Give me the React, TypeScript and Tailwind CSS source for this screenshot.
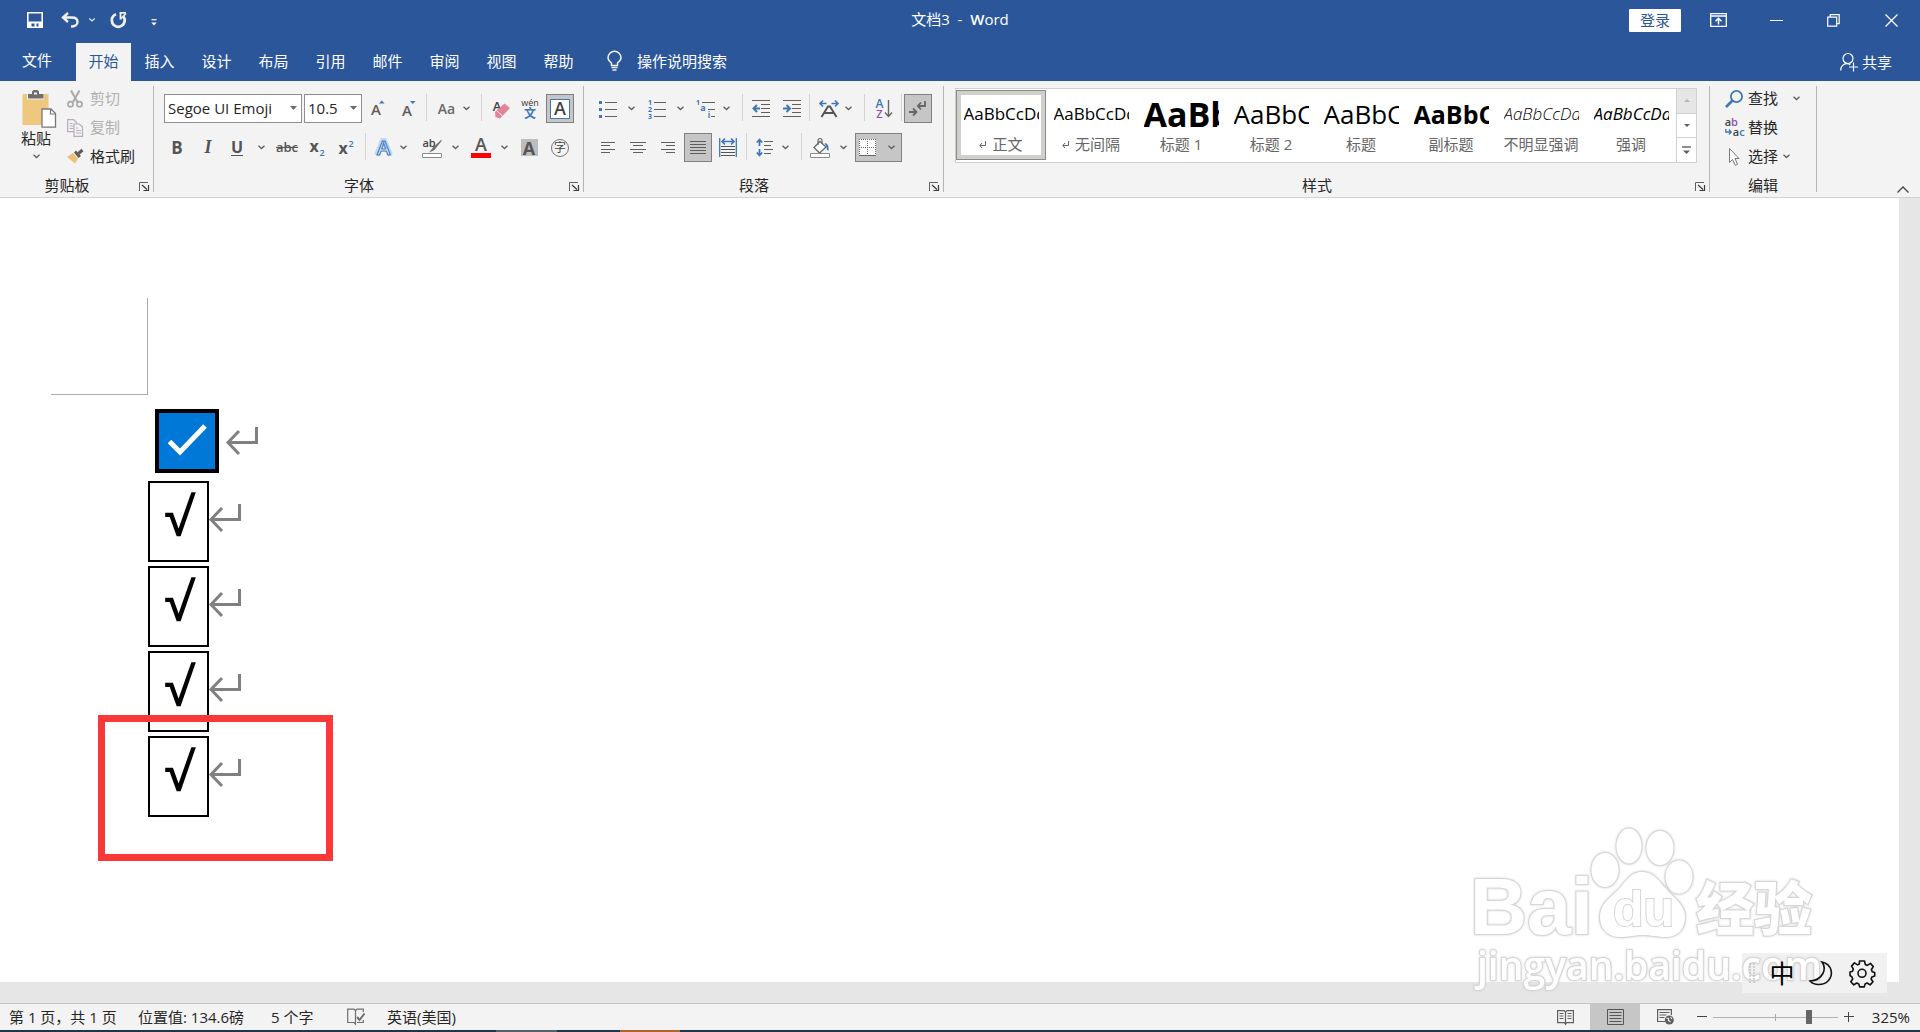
import type { ReactNode } from "react"

const INK = "#5f5f5f"
const BLUE = "#3f78b5"

const tabs = ["插入", "设计", "布局", "引用", "邮件", "审阅", "视图", "帮助"]

const styles = [
  { name: "正文", sample: "AaBbCcDd", look: "text-[17px] font-normal", mark: true },
  { name: "无间隔", sample: "AaBbCcDd", look: "text-[17px] font-normal", mark: true },
  { name: "标题 1", sample: "AaBb", look: "text-[34px] font-bold", mark: false },
  { name: "标题 2", sample: "AaBbC", look: "text-[26px] font-normal", mark: false },
  { name: "标题", sample: "AaBbC", look: "text-[26px] font-normal", mark: false },
  { name: "副标题", sample: "AaBbC", look: "text-[25px] font-bold", mark: false },
  { name: "不明显强调", sample: "AaBbCcDd", look: "text-[17px] font-light italic text-[#404040]", mark: false },
  { name: "强调", sample: "AaBbCcDd", look: "text-[17px] font-normal italic", mark: false },
]

function Svg({ w, h, children }: { w: number; h: number; children: ReactNode }) {
  return (
    <svg width={w} height={h} viewBox={`0 0 ${w} ${h}`} fill="none" className="shrink-0 overflow-visible" aria-hidden="true">
      {children}
    </svg>
  )
}

function Chevron() {
  return (
    <Svg w={7} h={5}>
      <path d="M0.5 0.8 3.5 3.5 6.5 0.8" stroke={INK} strokeWidth="1.4" />
    </Svg>
  )
}

function Triangle() {
  return (
    <Svg w={7} h={4}>
      <path d="M0 0h7L3.5 4z" fill="#6a6a6a" />
    </Svg>
  )
}

function Sep() {
  return <div className="mx-0.5 h-[27px] w-px shrink-0 bg-[#d4d4d4]" />
}

function Tool({ label, className, children }: { label: string; className: string; children: ReactNode }) {
  return (
    <button aria-label={label} className={`flex h-[29px] shrink-0 items-center justify-center ${className}`}>
      {children}
    </button>
  )
}

function Group({ label, launcher = true, className = "", children }: { label: string; launcher?: boolean; className?: string; children: ReactNode }) {
  return (
    <section className="flex shrink-0">
      <div className={`flex flex-col ${className}`}>
        <div className="h-[94px]">{children}</div>
        <div className="flex h-5 items-center">
          <span className="flex-1 text-center text-[15px] leading-5">{label}</span>
          {launcher && (
            <button aria-label={`${label}设置`} className="flex w-[19px] justify-center pt-0.5">
              <Svg w={10} h={9}>
                <path d="M0.5 9V0.5H9" stroke={INK} />
                <path d="M3 3l5 4.500M9.500 3v5.500H4.500" stroke="#3a3a3a" strokeWidth="1.200" />
              </Svg>
            </button>
          )}
        </div>
      </div>
      <div className="mt-[5px] h-[106px] w-px bg-[#b5b5b5]" />
    </section>
  )
}

function Letter({ x, y, size, fill = "#444", weight = 600, children }: { x: number; y: number; size: number; fill?: string; weight?: number; children: ReactNode }) {
  return (
    <text x={x} y={y} fontSize={size} fill={fill} fontWeight={weight} textAnchor="middle" fontFamily="'Open Sans','Noto Sans CJK SC',sans-serif">
      {children}
    </text>
  )
}

function TitleBar() {
  return (
    <div className="flex h-[43px] items-start text-white">
      <div className="flex h-10 flex-1 items-center pl-[27px]">
        <button aria-label="保存" className="mr-[18px]">
          <Svg w={16} h={16}>
            <path d="M0.800 0.800h14.400v14.400H0.800z" stroke="#fff" strokeWidth="1.600" />
            <path d="M1 9.500h14v6H11.500V11.500H9.500V15H7.500V11.500H4.500V15.500H1z" fill="#fff" />
          </Svg>
        </button>
        <button aria-label="撤消" className="mr-2.5">
          <Svg w={18} h={16}>
            <path d="M7 1 2 5.500 7 10M2 5.500h9c4 0 5.500 2 5.500 4.500S14 14.500 10 14.500" stroke="#f0f0f0" strokeWidth="2.400" />
          </Svg>
        </button>
        <button aria-label="撤消选项" className="mr-[15px]">
          <Svg w={6} h={4}>
            <path d="M0.300 0.500 3 3 5.700 0.500" stroke="#e8e8e8" strokeWidth="1.200" />
          </Svg>
        </button>
        <button aria-label="重复" className="mr-6">
          <Svg w={17} h={16}>
            <path d="M6 2.200A6.500 6.500 0 1 0 13.500 4.500" stroke="#f0f0f0" strokeWidth="2.800" />
            <path d="M9.500 0.800H16M10.500 1v6.500" stroke="#f0f0f0" strokeWidth="1.800" />
            <path d="M10.500 7 16 1.500" stroke="#f0f0f0" strokeWidth="1.600" />
          </Svg>
        </button>
        <button aria-label="自定义快速访问工具栏" className="mt-1">
          <Svg w={6} h={7}>
            <path d="M0.500 0.700h5" stroke="#fff" strokeWidth="1.200" />
            <path d="M0.300 3.500h5.400L3 6.500z" fill="#fff" />
          </Svg>
        </button>
      </div>
      <h1 className="pt-[9px] pr-[5px] text-[15px] leading-5 whitespace-pre">
        文档3{"  -  "}
        <span className="font-semibold">W</span>ord
      </h1>
      <div className="flex h-10 flex-1 items-center justify-end pr-[22px]">
        <button className="mr-[29px] h-[23px] w-[52px] rounded-[1px] bg-white text-[15px] leading-5 text-[#2b579a]">登录</button>
        <button aria-label="功能区显示选项" className="mr-[43px]">
          <Svg w={17} h={14}>
            <path d="M0.700 0.700h15.600v12.600H0.700zM1 3h15" stroke="#fff" strokeWidth="1.300" />
            <path d="M8.500 11.500V5.500M5.500 8.300l3-3 3 3" stroke="#fff" strokeWidth="1.500" />
          </Svg>
        </button>
        <button aria-label="最小化" className="mr-11">
          <Svg w={13} h={14}>
            <path d="M0 7.500h13" stroke="#fff" />
          </Svg>
        </button>
        <button aria-label="还原" className="mr-[45px]">
          <Svg w={13} h={13}>
            <path d="M0.700 3.200h9v9h-9z" stroke="#fff" strokeWidth="1.200" />
            <path d="M3.200 3V0.700h9v9H10" stroke="#fff" strokeWidth="1.200" />
          </Svg>
        </button>
        <button aria-label="关闭">
          <Svg w={13} h={13}>
            <path d="M0.500 0.500l12 12M12.500 0.500l-12 12" stroke="#fff" strokeWidth="1.300" />
          </Svg>
        </button>
      </div>
    </div>
  )
}

function TabBar() {
  return (
    <nav className="flex h-[38px] text-[15px] text-white">
      <button className="w-[76px] pr-[2px] pb-1">文件</button>
      <button className="w-[55px] bg-[#f3f3f3] pb-0.5 text-[#2b579a]">开始</button>
      {tabs.map((tab) => (
        <button key={tab} className="w-[57px] pb-0.5">{tab}</button>
      ))}
      <button className="ml-5 flex items-center gap-[15px] pb-0.5">
        <Svg w={15} h={20}>
          <path d="M4.500 14.500V12C2.500 10.500 1 9 1 6.800a6.300 6.300 0 0 1 13 0C14 9 12.500 10.500 10.500 12v2.500z" stroke="#f0f0f0" strokeWidth="1.500" />
          <path d="M4.500 16.500h6M5.500 19h4" stroke="#f0f0f0" strokeWidth="1.500" />
        </Svg>
        操作说明搜索
      </button>
      <button className="ml-auto flex items-center gap-1 pr-[28px]">
        <Svg w={18} h={18}>
          <circle cx="8" cy="5.500" r="5" stroke="#fff" strokeWidth="1.200" />
          <path d="M0.700 17.500c0-4 2.500-6.800 6-6.800 1.500 0 2.600.3 3.600 1M13.500 9.500v9M9 14h9" stroke="#fff" strokeWidth="1.200" />
        </Svg>
        共享
      </button>
    </nav>
  )
}

function Clipboard() {
  return (
    <Group label="剪贴板" className="w-[153px]">
      <div className="flex">
        <button className="flex w-[61px] flex-col items-center pt-[9px] pl-[11px] text-[15px] leading-5">
          <span className="pl-1.5">
            <Svg w={35} h={38}>
              <path d="M0.500 4h26v31h-26z" fill="#edc87e" />
              <path d="M5 3h17v6.500H5z" fill="#f3f3f3" />
              <path d="M6 8.500V4h4V1.500L11.500 0h4L17 1.500V4h4.500v4.500z" fill="#6f6f6f" />
              <path d="M12 2.500h3v2h-3z" fill="#f3f3f3" />
              <path d="M20 19h9l4.500 4.500V37.200H20z" fill="#fff" stroke="#777" strokeWidth="1.300" />
              <path d="M28.500 19v5h5" stroke="#777" strokeWidth="1.200" />
            </Svg>
          </span>
          <span>粘贴</span>
          <span className="pt-1.5"><Chevron /></span>
        </button>
        <div className="flex flex-col pt-[3px] pl-1.5 text-[15px]">
          <button className="flex h-[29px] items-center gap-[7px] text-[#b1b1b1]" disabled>
            <Svg w={16} h={18}>
              <path d="M4 0.500 10.500 12M12.500 0.500 6 12" stroke="#a8a8a8" strokeWidth="2" />
              <circle cx="3.500" cy="14.200" r="2.600" stroke="#a8a8a8" strokeWidth="1.600" />
              <circle cx="12.500" cy="14.200" r="2.600" stroke="#a8a8a8" strokeWidth="1.600" />
            </Svg>
            剪切
          </button>
          <button className="flex h-[29px] items-center gap-[7px] text-[#b1b1b1]" disabled>
            <Svg w={16} h={18}>
              <path d="M0.600 0.600h6l3 3v9h-9z" stroke="#b5adb8" strokeWidth="1.200" />
              <path d="M2.500 4.500h3M2.500 7h4M2.500 9.500h4" stroke="#b5adb8" />
              <path d="M7 5h5.500l3 3v9.400H7z" fill="#f3f3f3" stroke="#b5adb8" strokeWidth="1.200" />
              <path d="M9 9h2M9 11.500h5M9 14h5" stroke="#b5adb8" />
            </Svg>
            复制
          </button>
          <button className="flex h-[29px] items-center gap-[6px]">
            <Svg w={17} h={15}>
              <path d="M0 8 6 4l5 5.500L8 14.500z" fill="#edc07a" />
              <path d="M7 3.500l2-2 5 5.500-2.500 2z" fill="#5c5c5c" />
              <path d="M11.500 4.500 15.500 1" stroke="#5c5c5c" strokeWidth="3" />
            </Svg>
            格式刷
          </button>
        </div>
      </div>
    </Group>
  )
}

function FontGroup() {
  return (
    <Group label="字体" className="w-[429px]">
      <div className="flex pt-[13px] pl-2.5">
        <label className="relative mr-0.5 block">
          <select aria-label="字体名称" className="block h-[29px] w-[138px] appearance-none border border-[#8f8f8f] bg-white pl-[3px] text-[15px] outline-none">
            <option>Segoe UI Emoji</option>
          </select>
          <span className="pointer-events-none absolute top-3 right-[5px]"><Triangle /></span>
        </label>
        <label className="relative block">
          <select aria-label="字号" className="block h-[29px] w-[58px] appearance-none border border-[#8f8f8f] bg-white pl-[3px] text-[15px] outline-none">
            <option>10.5</option>
          </select>
          <span className="pointer-events-none absolute top-3 right-[5px]"><Triangle /></span>
        </label>
        <Tool label="增大字号" className="w-8">
          <Svg w={14} h={18}>
            <Letter x={5} y={15} size={15} fill={INK}>A</Letter>
            <path d="M8 3.500 10.800 0.500l2.800 3z" fill={BLUE} />
          </Svg>
        </Tool>
        <Tool label="减小字号" className="w-[30px]">
          <Svg w={14} h={18}>
            <Letter x={5} y={16} size={15} fill={INK}>A</Letter>
            <path d="M8 1h5.600L10.800 4z" fill={BLUE} />
          </Svg>
        </Tool>
        <Sep />
        <Tool label="更改大小写" className="w-[50px] gap-2">
          <span className="text-[14px] font-semibold text-[#6a6a6a]">Aa</span>
          <Chevron />
        </Tool>
        <Sep />
        <Tool label="清除所有格式" className="w-[34px]">
          <Svg w={18} h={20}>
            <Letter x={5} y={12} size={13}>A</Letter>
            <path d="M3 13 12.500 4.500 18 9 8 19.500 3.500 18z" fill="#e58396" />
            <path d="M5 12l5.500 5" stroke="#f3f3f3" />
          </Svg>
        </Tool>
        <Tool label="拼音指南" className="w-6">
          <Svg w={18} h={22}>
            <Letter x={9} y={8} size={9} fill="#333" weight={500}>wén</Letter>
            <Letter x={9} y={20} size={12} fill={BLUE} weight={700}>文</Letter>
          </Svg>
        </Tool>
        <Tool label="字符边框" className="ml-1 w-7 border border-[#7f7f7f] bg-[#c6c6c6]">
          <span className="flex h-5 w-5 items-center justify-center border border-[#3f78b5] bg-white text-[18px] font-semibold text-[#444]">A</span>
        </Tool>
      </div>
      <div className="flex pt-2.5 pl-2.5">
        <Tool label="加粗" className="w-[26px] text-[17px] font-bold text-[#555]">B</Tool>
        <Tool label="倾斜" className="w-9 font-[Liberation_Serif] text-[18px] font-bold text-[#555] italic">I</Tool>
        <Tool label="下划线" className="w-11 gap-[15px]">
          <span className="border-b border-[#555] text-[16px] leading-4 font-bold text-[#555]">U</span>
          <Chevron />
        </Tool>
        <Tool label="删除线" className="w-[34px] text-[13px] font-semibold text-[#555] line-through">abc</Tool>
        <Tool label="下标" className="w-[26px]">
          <Svg w={17} h={18}>
            <Letter x={5} y={13} size={16} weight={700} fill="#555">x</Letter>
            <Letter x={13} y={17} size={9} fill={BLUE}>2</Letter>
          </Svg>
        </Tool>
        <Tool label="上标" className="w-[33px]">
          <Svg w={17} h={18}>
            <Letter x={5} y={15} size={16} weight={700} fill="#555">x</Letter>
            <Letter x={13} y={8} size={9} fill={BLUE}>2</Letter>
          </Svg>
        </Tool>
        <Sep />
        <Tool label="文本效果" className="w-[46px] gap-2">
          <Svg w={17} h={20}>
            <path d="M1.500 17 7.500 2.500h2L15.500 17" stroke="#c3daf0" strokeWidth="5" />
            <text x="8.500" y="17" fontSize="20" fontWeight="600" textAnchor="middle" fontFamily="'Open Sans',sans-serif" fill="#fff" stroke="#3f7cc4" strokeWidth="1.200">A</text>
          </Svg>
          <Chevron />
        </Tool>
        <Tool label="突出显示颜色" className="w-[52px] gap-2.5">
          <Svg w={20} h={20}>
            <Letter x={7} y={9} size={11}>ab</Letter>
            <path d="M19.500 1.500 11 9.500l-4 5 5.500-2.500 7-9z" fill="#6f6f6f" />
            <path d="M0.500 15.500h19v4H0.500z" fill="#fff" stroke="#8a8a8a" />
          </Svg>
          <Chevron />
        </Tool>
        <Tool label="字体颜色" className="w-[46px] gap-2.5">
          <Svg w={20} h={20}>
            <Letter x={10} y={13} size={18} fill="#555">A</Letter>
            <path d="M0 15h20v5H0z" fill="#f00" />
          </Svg>
          <Chevron />
        </Tool>
        <Tool label="字符底纹" className="w-[34px]">
          <span className="flex h-[17px] w-[17px] items-center justify-center bg-[#bdbdbd] text-[18px] leading-4 font-bold text-[#555]">A</span>
        </Tool>
        <Tool label="带圈字符" className="w-7">
          <span className="flex h-[18px] w-[18px] items-center justify-center rounded-full border border-[#777] text-[12px] leading-3 text-[#444]">字</span>
        </Tool>
      </div>
    </Group>
  )
}

function ParagraphGroup() {
  return (
    <Group label="段落" className="w-[359px]">
      <div className="flex pt-[13px] pl-2">
        <Tool label="项目符号" className="w-[50px] gap-[11px]">
          <Svg w={18} h={18}>
            <path d="M0 1h3v3H0zM0 8h3v3H0zM0 15h3v3H0z" fill={BLUE} />
            <path d="M6 2.500h12M6 9.500h12M6 16.500h12" stroke={INK} />
          </Svg>
          <Chevron />
        </Tool>
        <Tool label="编号" className="w-[47px] gap-[11px]">
          <Svg w={18} h={20}>
            <Letter x={2} y={6} size={7} fill={BLUE} weight={700}>1</Letter>
            <Letter x={2} y={13} size={7} fill={BLUE} weight={700}>2</Letter>
            <Letter x={2} y={20} size={7} fill={BLUE} weight={700}>3</Letter>
            <path d="M6 3.500h12M6 10.500h12M6 17.500h12" stroke={INK} />
          </Svg>
          <Chevron />
        </Tool>
        <Tool label="多级列表" className="w-12 gap-2">
          <Svg w={19} h={20}>
            <Letter x={2} y={6} size={7} fill={BLUE} weight={700}>1</Letter>
            <Letter x={7} y={12} size={9} fill={BLUE} weight={700}>a</Letter>
            <Letter x={13} y={19} size={8} fill={BLUE} weight={700}>i</Letter>
            <path d="M6 3.500h13M12 10.500h7M15 17.500h4" stroke={INK} />
          </Svg>
          <Chevron />
        </Tool>
        <div className="ml-[3px]"><Sep /></div>
        <Tool label="减少缩进量" className="w-8">
          <Svg w={18} h={17}>
            <path d="M0 0.500h18M9 4.500h9M9 8.500h9M9 12.500h9M0 16.500h18" stroke={INK} />
            <path d="M8 8.500H1.500M5 5 1.500 8.500 5 12" stroke={BLUE} strokeWidth="2" />
          </Svg>
        </Tool>
        <Tool label="增加缩进量" className="w-[30px]">
          <Svg w={18} h={17}>
            <path d="M0 0.500h18M9 4.500h9M9 8.500h9M9 12.500h9M0 16.500h18" stroke={INK} />
            <path d="M0 8.500h7M3.500 5 7 8.500 3.500 12" stroke={BLUE} strokeWidth="2" />
          </Svg>
        </Tool>
        <Sep />
        <Tool label="中文版式" className="w-[50px] gap-1.5 pr-1">
          <Svg w={20} h={18}>
            <path d="M7.500 3.500H1M4 0.500l-3 3 3 3M12.500 3.500H19M16 0.500l3 3-3 3" stroke={BLUE} strokeWidth="1.700" />
            <path d="M2.500 17 9 6.500h2L17.500 17M5.500 13h9" stroke="#555" strokeWidth="2" />
          </Svg>
          <Chevron />
        </Tool>
        <Sep />
        <Tool label="排序" className="w-8">
          <Svg w={17} h={20}>
            <Letter x={4.5} y={9} size={12} fill={BLUE}>A</Letter>
            <Letter x={4.5} y={19} size={11} fill="#8d4fae">Z</Letter>
            <path d="M13.500 1v16M10 13.500l3.500 4 3.500-4" stroke="#666" strokeWidth="1.400" />
          </Svg>
        </Tool>
        <Sep />
        <Tool label="显示编辑标记" className="w-7 border border-[#7f7f7f] bg-[#c6c6c6]">
          <Svg w={18} h={15}>
            <path d="M16 0v5H9M12 1.500 8.800 5 12 8.500" stroke="#666" strokeWidth="1.800" />
            <path d="M0 11h7M4 7.500 7.500 11 4 14.500" stroke="#666" strokeWidth="1.800" />
          </Svg>
        </Tool>
      </div>
      <div className="flex pt-2.5 pl-2">
        <Tool label="左对齐" className="w-8">
          <Svg w={14} h={11}>
            <path d="M0 0.500h14M0 3.500h9M0 7.500h14M0 10.500h9" stroke={INK} />
          </Svg>
        </Tool>
        <Tool label="居中" className="w-7">
          <Svg w={16} h={11}>
            <path d="M0 0.500h16M3 3.500h10M0 7.500h16M3 10.500h10" stroke={INK} />
          </Svg>
        </Tool>
        <Tool label="右对齐" className="w-8">
          <Svg w={14} h={11}>
            <path d="M0 0.500h14M5 3.500h9M0 7.500h14M5 10.500h9" stroke={INK} />
          </Svg>
        </Tool>
        <Tool label="两端对齐" className="w-7 border border-[#7f7f7f] bg-[#c6c6c6]">
          <Svg w={16} h={15}>
            <path d="M0 1.500h16M0 4.500h16M0 7.500h16M0 10.500h16M0 13.500h16" stroke={INK} />
          </Svg>
        </Tool>
        <Tool label="分散对齐" className="w-8">
          <Svg w={18} h={19}>
            <path d="M0.700 0v19M17.300 0v19" stroke={BLUE} strokeWidth="1.300" />
            <path d="M3 3.500h12M6 0.500l-3 3 3 3M12 0.500l3 3-3 3" stroke={BLUE} strokeWidth="1.700" />
            <path d="M2 8.500h14M2 11.500h14M2 14.500h14M2 17.500h14" stroke="#555" />
          </Svg>
        </Tool>
        <Sep />
        <Tool label="行距" className="w-[50px] gap-[9px] pr-1">
          <Svg w={17} h={19}>
            <path d="M3.500 8V1.500M0.800 4.500l2.700-3 2.700 3M3.500 11v6.500M0.800 14.500l2.700 3 2.700-3" stroke={BLUE} strokeWidth="1.800" />
            <path d="M8 3.500h9M8 7.500h7M8 11.500h9M8 15.500h7" stroke={INK} />
          </Svg>
          <Chevron />
        </Tool>
        <Sep />
        <Tool label="底纹" className="w-[51px] gap-2.5 pr-0.5">
          <Svg w={20} h={20}>
            <path d="M4 9.500 10 3.500l6 5.500-6.500 6z" fill="#fff" stroke="#6a6a6a" strokeWidth="1.300" />
            <path d="M8 7V2.500a2 2 0 0 1 4 0V6" stroke="#6a6a6a" strokeWidth="1.200" />
            <path d="M14.500 5c3.500.5 4.500 3 4 8-1.500-1-2-2-2-4z" fill={BLUE} />
            <path d="M0.500 15.500h19v4H0.500z" fill="#fff" stroke="#8a8a8a" />
          </Svg>
          <Chevron />
        </Tool>
        <Tool label="边框" className="w-[47px] gap-3 border border-[#7f7f7f] bg-[#c6c6c6] pr-1">
          <Svg w={17} h={17}>
            <path d="M0 0h17v17H0z" fill="#fff" />
            <path d="M0 0.500h17M0.500 0v16M16.500 0v16M8.500 0v16M0 8.500h17" stroke="#666" strokeDasharray="1 1" />
            <path d="M0 16.500h17" stroke="#666" />
          </Svg>
          <Chevron />
        </Tool>
      </div>
    </Group>
  )
}

function StylesGroup() {
  return (
    <Group label="样式" className="w-[765px]">
      <div className="pt-[7px] pl-[11px]">
        <div className="flex h-[75px] w-[742px] border border-[#d0d0d0] bg-white">
          {styles.map((s, i) => (
            <button
              key={s.name}
              className={`mt-px flex h-[70px] w-[90px] flex-col items-center overflow-hidden ${i === 0 ? "shadow-[inset_0_0_0_1px_#8a8a88,inset_0_0_0_5px_#d0cfcc]" : ""}`}
            >
              <span className={`flex h-[41px] w-[75px] shrink-0 items-center overflow-hidden pt-1.5 leading-[34px] text-black ${s.look}`}>{s.sample}</span>
              <span className="flex items-center gap-1.5 text-[15px] leading-[26px] whitespace-nowrap text-[#666]">
                {s.mark && (
                  <Svg w={7} h={8}>
                    <path d="M6.500 1v4.500H1M3 3 0.800 5.500 3 8" stroke="#666" />
                  </Svg>
                )}
                {s.name}
              </span>
            </button>
          ))}
          <div className="flex w-5 shrink-0 flex-col border-l border-[#d0d0d0]">
            <button aria-label="上一行" className="flex flex-1 items-center justify-center bg-[#e6e6e6]">
              <Svg w={6} h={3}>
                <path d="M0 3h6L3 0z" fill="#b5b5b5" />
              </Svg>
            </button>
            <button aria-label="下一行" className="flex flex-1 items-center justify-center border-y border-[#d0d0d0]">
              <Svg w={6} h={3}>
                <path d="M0 0h6L3 3z" fill={INK} />
              </Svg>
            </button>
            <button aria-label="其他样式" className="flex flex-1 items-center justify-center">
              <Svg w={9} h={8}>
                <path d="M0 1h9" stroke={INK} strokeWidth="1.400" />
                <path d="M1 4.500h7L4.500 8z" fill={INK} />
              </Svg>
            </button>
          </div>
        </div>
      </div>
    </Group>
  )
}

function EditGroup() {
  return (
    <Group label="编辑" launcher={false} className="w-[106px]">
      <div className="flex flex-col pt-[3px] pl-[15px] text-[15px]">
        <button className="flex h-[29px] items-center gap-[5px]">
          <Svg w={18} h={18}>
            <circle cx="11.500" cy="6.500" r="5.600" stroke={BLUE} strokeWidth="1.800" />
            <path d="M7.500 10.500 1 17" stroke={BLUE} strokeWidth="2.600" />
          </Svg>
          <span className="pr-2.5">查找</span>
          <Chevron />
        </button>
        <button className="flex h-[29px] items-center gap-[5px]">
          <Svg w={18} h={20}>
            <Letter x={3} y={8} size={11}>a</Letter>
            <Letter x={9.5} y={8} size={11} fill="#8d4fae">b</Letter>
            <Letter x={11} y={18} size={11}>a</Letter>
            <Letter x={17} y={18} size={11} fill={BLUE}>c</Letter>
            <path d="M0.800 11v3h5M4 11.500l2.200 2.500L4 16.500" stroke={BLUE} strokeWidth="1.300" />
          </Svg>
          替换
        </button>
        <button className="flex h-[29px] items-center gap-[5px]">
          <Svg w={18} h={18}>
            <path d="M4.500 0.500v14l3-3 2.700 5.800 2.300-1L10 10.500h4z" fill="#fff" stroke="#777" />
          </Svg>
          选择
          <Chevron />
        </button>
      </div>
    </Group>
  )
}

function Ribbon() {
  return (
    <div className="flex h-[117px] border-b border-[#d2d2d2] bg-[#f3f3f3] text-[#262626]">
      <Clipboard />
      <FontGroup />
      <ParagraphGroup />
      <StylesGroup />
      <EditGroup />
      <button aria-label="折叠功能区" className="mt-auto ml-auto pr-[11px] pb-1">
        <Svg w={12} h={7}>
          <path d="M0.500 6.500 6 1l5.500 5.500" stroke="#444" strokeWidth="1.300" />
        </Svg>
      </button>
    </div>
  )
}

function ReturnMark() {
  return (
    <Svg w={32} h={28}>
      <path d="M30.500 0v15.500H2M13 4 2 15.500 13 27" stroke="#808080" strokeWidth="3" />
    </Svg>
  )
}

function Watermark() {
  return (
    <div className="pointer-events-none absolute right-[102px] bottom-2 w-[346px]">
      <svg width="346" height="182" viewBox="0 0 346 182" fill="#fff" stroke="#d6d6d6" strokeWidth="2" paintOrder="stroke" aria-label="Baidu经验 jingyan.baidu.com" className="block overflow-visible drop-shadow-[0_0_1px_#d0d0d0]">
        <ellipse cx="133" cy="57" rx="13.500" ry="17" />
        <ellipse cx="157" cy="33" rx="12.500" ry="17.500" />
        <ellipse cx="188" cy="35" rx="13.500" ry="17" />
        <ellipse cx="207" cy="64" rx="13.500" ry="16.500" />
        <path d="M170 59c-12 0-16 10-24 18-9 8-18 15-18 27 0 13 9 20 20 20 9 0 14-2 23-2s14 2 23 2c11 0 19-7 19-20 0-12-10-18-18-27s-13-18-25-18z" />
        <text x="-2" y="121" fontSize="79" fontWeight="700" fontFamily="'Liberation Sans',sans-serif">Bai</text>
        <text x="141" y="113" fontSize="50" fontWeight="700" fontFamily="'Liberation Sans',sans-serif">du</text>
        <text x="224" y="117" fontSize="58" fontWeight="900" fontFamily="'Noto Sans CJK SC',sans-serif">经验</text>
        <text x="5" y="167" fontSize="39" fontWeight="600" fontFamily="'Open Sans',sans-serif">jingyan.baidu.com</text>
      </svg>
    </div>
  )
}

function Document() {
  return (
    <main className="relative flex flex-1 bg-[#e6e6e6] pr-[21px] pb-[21px]">
      <div className="flex-1 bg-white pt-[100px]">
        <div className="ml-[51px] h-[97px] w-[97px] border-r border-b border-[#ababab]" />
        <div className="mt-3.5 ml-[155px] flex items-center gap-[7px]">
          <span className="flex h-16 w-16 items-center justify-center border-4 border-black bg-[#0078d7] pb-1">
            <Svg w={40} h={32}>
              <path d="M2.500 18.500 13 29 38 3" stroke="#fff" strokeWidth="5" />
            </Svg>
          </span>
          <ReturnMark />
        </div>
        <div className="mt-2 ml-[148px] flex flex-col gap-1">
          {[1, 2, 3, 4].map((n) => (
            <div key={n} className="flex h-[81px] items-center">
              <span className="flex h-[81px] w-[61px] items-center justify-center border-2 border-black pb-3 text-[52px] leading-[68px] font-semibold text-black">√</span>
              <span className="pb-2"><ReturnMark /></span>
            </div>
          ))}
        </div>
      </div>

      <div className="absolute top-[517px] left-[98px] h-[146px] w-[235px] border-[7px] border-[#fb3838]" />

      <div className="absolute right-[33px] bottom-2.5 h-10 w-[145px] bg-[#f1f1f1]" />
      <Watermark />
      <div className="absolute right-[33px] bottom-2.5 flex h-10 w-[145px] items-center pl-[7px]">
        <Svg w={6} h={20}>
          <path d="M1 0v20M5 0v20" stroke="#b0b0b0" strokeDasharray="2 1" />
        </Svg>
        <button className="w-[54px] text-[25px] leading-8 text-black">中</button>
        <button aria-label="月亮" className="w-7">
          <Svg w={24} h={25}>
            <path d="M13 1c5 7 1 18-12 19 4 4.500 13 5 18 0 6-6.500 4-16.500-6-19z" stroke="#111" strokeWidth="1.600" />
          </Svg>
        </button>
        <button aria-label="设置" className="pl-3">
          <Svg w={26} h={26}>
            <path d="M10.500 1h5l.8 3.500 2 .9 3.100-2 2.900 3.200-1.900 2.900.8 2.300 2.500.7v3.500l-2.800.9-.8 2.100 1.900 2.800-2.900 3.100-3-1.900-2 .9-.9 3h-4.500l-.9-3-2.100-.9-2.900 1.900-3-3.100 1.900-2.800-.8-2.100L1 15.500V12l2.500-.7.8-2.300-1.800-2.900 2.900-3.200 3.200 2 1.700-.9z" stroke="#111" strokeWidth="1.600" strokeLinejoin="round" />
            <circle cx="13" cy="13.300" r="4" stroke="#111" strokeWidth="1.600" />
          </Svg>
        </button>
      </div>
    </main>
  )
}

function StatusBar() {
  return (
    <footer className="flex h-[27px] items-stretch border-t border-[#c6c6c6] bg-[#f3f3f3] text-[15px] leading-[26px] text-[#262626]">
      <div className="flex items-center pl-[9px] whitespace-nowrap">
        <span className="w-[129px]">第 1 页，共 1 页</span>
        <span className="w-[133px]">位置值: 134.6磅</span>
        <span className="w-[76px]">5 个字</span>
        <button aria-label="校对" className="w-10">
          <Svg w={18} h={18}>
            <path d="M8.500 16 7 14.500H0.700V1.200H7L8.500 2.500 10 1.200h6.300V4M8.500 2.500v14.500M16.300 12v2.500H10" stroke="#6f6f6f" strokeWidth="1.200" />
            <path d="M10 9l2.500 3 5-6.500" stroke="#6f6f6f" strokeWidth="2" />
          </Svg>
        </button>
        <span>英语(美国)</span>
      </div>
      <div className="ml-auto flex items-center pr-2.5">
        <button aria-label="阅读视图" className="flex h-full w-[50px] items-center justify-center">
          <Svg w={17} h={15}>
            <path d="M8.500 2 7 0.600H0.600v12H7l1.500 1.400 1.500-1.400h6.400v-12H10zM8.500 2v13" stroke={INK} strokeWidth="1.200" />
            <path d="M2.500 3.500h4M2.500 6h4M2.500 8.500h4M10.500 3.500h4M10.500 6h4M10.500 8.500h4" stroke={INK} />
          </Svg>
        </button>
        <button aria-label="页面视图" className="flex h-full w-[50px] items-center justify-center bg-[#c6c6c6]">
          <Svg w={17} h={16}>
            <path d="M0.500 0.500h16v15H0.500z" stroke="#555" />
            <path d="M2.500 3.500h12M2.500 6.500h12M2.500 9.500h12M2.500 12.500h12" stroke="#555" />
          </Svg>
        </button>
        <button aria-label="Web 版式视图" className="flex h-full w-[50px] items-center justify-center">
          <Svg w={17} h={16}>
            <path d="M8 12.500H0.600V0.600h13.800V6" stroke={INK} strokeWidth="1.200" />
            <path d="M2.500 3.500h10M2.500 6h7M2.500 8.500h5" stroke={INK} />
            <circle cx="12.300" cy="11" r="4.500" fill={INK} />
            <path d="M9.500 9l2 .5v2l2 1.500M13.500 8l1.500 2" stroke="#f3f3f3" strokeWidth="1.100" />
          </Svg>
        </button>
        <button aria-label="缩小" className="pl-[7px]">
          <Svg w={10} h={10}>
            <path d="M0 4.500h10" stroke="#444" />
          </Svg>
        </button>
        <div className="relative mx-1.5 flex items-center">
          <span className="absolute left-[62px] h-[7px] w-px bg-[#aaa]" />
          <input
            type="range"
            aria-label="显示比例"
            min={0}
            max={100}
            defaultValue={78}
            className="relative h-4 w-[125px] appearance-none bg-[linear-gradient(#b0b0b0,#b0b0b0)] bg-[length:100%_1px] bg-center bg-no-repeat [&::-webkit-slider-thumb]:h-3.5 [&::-webkit-slider-thumb]:w-1.5 [&::-webkit-slider-thumb]:appearance-none [&::-webkit-slider-thumb]:bg-[#666]"
          />
        </div>
        <button aria-label="放大">
          <Svg w={10} h={10}>
            <path d="M0 4.500h10M4.500 0v10" stroke="#444" />
          </Svg>
        </button>
        <button className="w-14 text-right">325%</button>
      </div>
    </footer>
  )
}

export default function App() {
  return (
    <div className="flex min-h-screen flex-col font-['Open_Sans','Noto_Sans_CJK_SC',sans-serif]">
      <header className="bg-[#2b579a]">
        <TitleBar />
        <TabBar />
      </header>
      <Ribbon />
      <Document />
      <StatusBar />
      <div className="flex h-0.5 bg-[#20344a]">
        <span className="ml-[496px] w-[61px] bg-[#53626f]" />
        <span className="ml-[63px] w-[60px] bg-[#b0652f]" />
      </div>
    </div>
  )
}
